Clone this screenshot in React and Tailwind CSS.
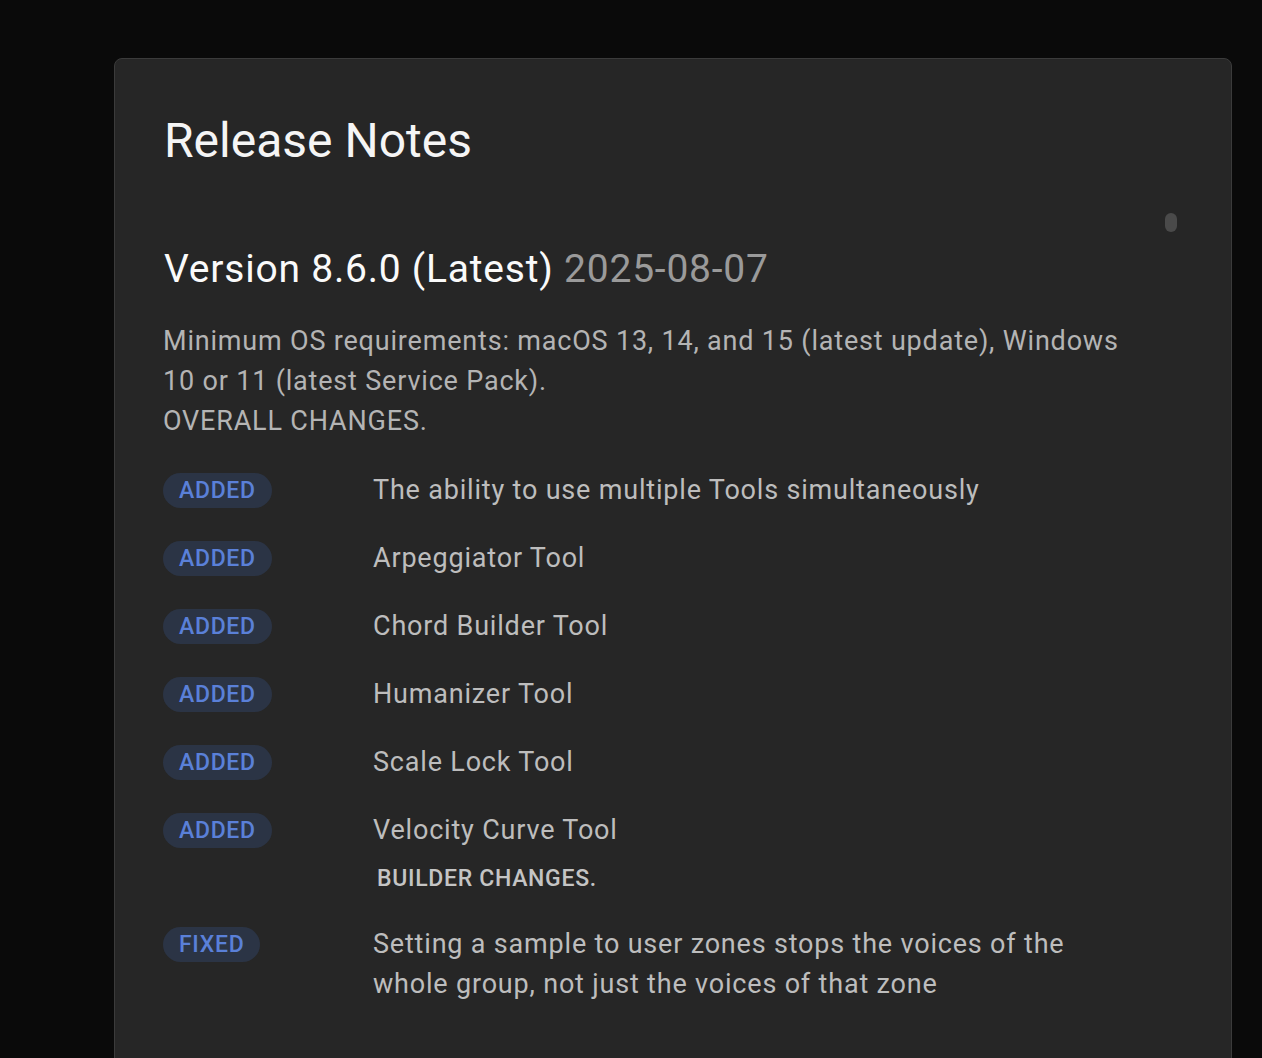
import React from 'react';

const changes = [
  { tag: 'ADDED', text: 'The ability to use multiple Tools simultaneously' },
  { tag: 'ADDED', text: 'Arpeggiator Tool' },
  { tag: 'ADDED', text: 'Chord Builder Tool' },
  { tag: 'ADDED', text: 'Humanizer Tool' },
  { tag: 'ADDED', text: 'Scale Lock Tool' },
  { tag: 'ADDED', text: 'Velocity Curve Tool', sub: 'BUILDER CHANGES.' },
  { tag: 'FIXED', text: 'Setting a sample to user zones stops the voices of the whole group, not just the voices of that zone' },
];

function Badge({ label }) {
  return (
    <span className="mt-[3px] inline-flex h-[35px] items-center rounded-full bg-[#2b3445] px-[16px] text-[23px] font-medium leading-none tracking-[0.03em] text-[#5a80d8]">
      {label}
    </span>
  );
}

export default function App() {
  return (
    <div
      className="h-screen w-full overflow-hidden bg-[#0a0a0a] pl-[114px] pr-[30px] pt-[58px]"
      style={{ fontFamily: 'Roboto, "Noto Sans", sans-serif' }}
    >
      <div className="min-h-[1040px] w-[1118px] rounded-lg border border-[#3b3b3b] bg-[#262626] px-[48px] pt-[54px]">
        <h1 className="ml-[1px] text-[48px] leading-[56px] font-normal text-[#f5f5f5]">Release Notes</h1>

        {/* scroll area */}
        <div className="relative mt-[77px]">
          <div className="absolute right-[6px] top-[-33px] h-[19px] w-[12px] rounded-full bg-[#4a4a4a]" />

          <h2 className="ml-[1px] text-[39px] leading-[46px] font-normal tracking-[0.02em] text-[#fafafa]">
            Version 8.6.0 (Latest) <span className="text-[#9a9a9a]">2025-08-07</span>
          </h2>

          <div className="mt-[29px] max-w-[975px] text-[27px] leading-[40px] tracking-[0.03em] text-[#b4b4b4]">
            <p>Minimum OS requirements: macOS 13, 14, and 15 (latest update), Windows 10 or 11 (latest Service Pack).</p>
            <p>OVERALL CHANGES.</p>
          </div>

          <div className="mt-[29px] flex flex-col gap-[28px]">
            {changes.map((c, i) => (
              <div key={i} className="flex items-start">
                <div className="w-[210px] shrink-0">
                  <Badge label={c.tag} />
                </div>
                <div className="max-w-[720px] text-[27px] leading-[40px] tracking-[0.03em] text-[#bdbdbd]">
                  <p>{c.text}</p>
                  {c.sub && (
                    <p className="ml-[4px] mt-[12px] text-[23px] leading-[34px] font-medium tracking-[0.03em] text-[#c4c4c4]">{c.sub}</p>
                  )}
                </div>
              </div>
            ))}
          </div>
        </div>
      </div>
    </div>
  );
}
